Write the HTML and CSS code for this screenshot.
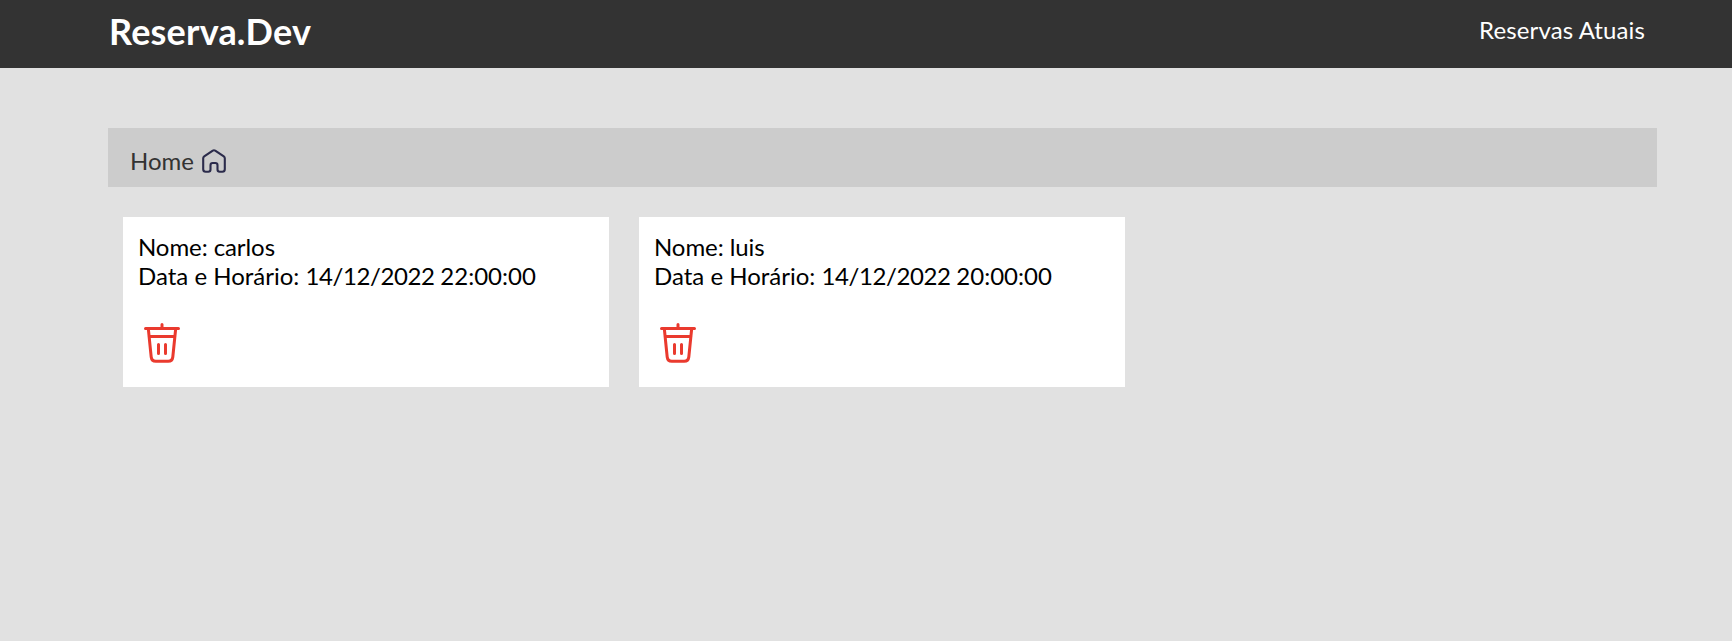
FILE: index.html
```
<!DOCTYPE html>
<html lang="pt-BR">
<head>
<meta charset="utf-8">
<title>Reserva.Dev</title>
<link rel="stylesheet" href="styles.css">
</head>
<body>
<header class="header">
  <div class="container header-inner">
    <h1 class="brand">Reserva.Dev</h1>
    <a class="nav-link">Reservas Atuais</a>
  </div>
</header>
<main class="container">
  <nav class="breadcrumb">
    <a class="home">Home</a>
    <svg class="home-icon" viewBox="0 0 24 24"><path d="M1.2 9.2Q1.2 8 2.2 7.3L10.8 1.6Q12 .8 13.2 1.6L21.8 7.3Q22.8 8 22.8 9.2V20.3Q22.8 22.8 20.3 22.8H17.7Q15.5 22.8 15.5 20.6V16.2Q15.5 14 13.3 14H10.7Q8.5 14 8.5 16.2V20.6Q8.5 22.8 6.3 22.8H3.7Q1.2 22.8 1.2 20.3Z"/></svg>
  </nav>
  <section class="cards">
    <article class="card">
      <p class="name">Nome: carlos</p>
      <p>Data e Horário: <span class="date">14/12/2022 </span>22:00:00</p>
      <svg class="trash" viewBox="0 0 36 40"><path d="M1.5 5.5H34.5M18 1.5V5.5M4.3 5.5L7.2 34Q7.7 38.2 11.8 38.2H24.2Q28.3 38.2 28.8 34L31.7 5.5M5 13.5H31M14.5 21.5V30.5M21.5 21.5V30.5"/></svg>
    </article>
    <article class="card">
      <p class="name">Nome: luis</p>
      <p>Data e Horário: <span class="date">14/12/2022 </span>20:00:00</p>
      <svg class="trash" viewBox="0 0 36 40"><path d="M1.5 5.5H34.5M18 1.5V5.5M4.3 5.5L7.2 34Q7.7 38.2 11.8 38.2H24.2Q28.3 38.2 28.8 34L31.7 5.5M5 13.5H31M14.5 21.5V30.5M21.5 21.5V30.5"/></svg>
    </article>
  </section>
</main>
</body>
</html>
```
FILE: styles.css
```
* { box-sizing: border-box; margin: 0; padding: 0; }
body { background: #e1e1e1; color: #000; font: 24px/29px Lato, sans-serif; }
.container { margin-left: 108px; width: 1549px; }
.header { background: #333; color: #fff; height: 68px; margin-bottom: 60px; }
.header-inner { display: flex; justify-content: space-between; padding: 9px 12px 0 1px; }
.brand { font-size: 36px; line-height: 44px; font-weight: 700; letter-spacing: .2px; }
.nav-link { padding-top: 6px; letter-spacing: .12px; }
.breadcrumb { display: flex; height: 59px; padding: 18px 22px 0; background: #ccc; color: #333; }
.home-icon { width: 24px; height: 24px; margin: 3px 0 0 8px; fill: none; stroke: #2b2b4b; stroke-width: 2.1; stroke-linejoin: round; }
.cards { display: grid; grid-template-columns: repeat(3, 486px); gap: 30px; padding: 30px 15px; }
.card { height: 170px; padding: 15px; background: #fff; }
.name { letter-spacing: -.08px; }
.date { letter-spacing: -.4px; }
.trash { display: block; width: 36px; height: 40px; margin: 33px 0 0 6px; fill: none; stroke: #ea3a2e; stroke-width: 3; stroke-linecap: round; }
```
